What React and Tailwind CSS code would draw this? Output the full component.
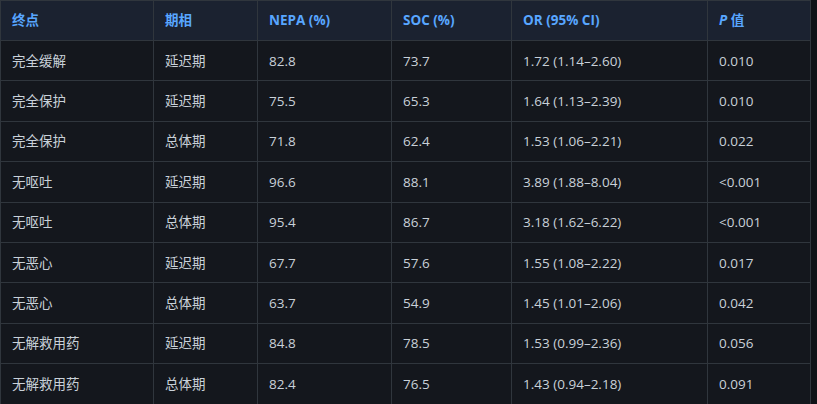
import React from "react";

const rows = [
  ["完全缓解", "延迟期", "82.8", "73.7", "1.72 (1.14–2.60)", "0.010"],
  ["完全保护", "延迟期", "75.5", "65.3", "1.64 (1.13–2.39)", "0.010"],
  ["完全保护", "总体期", "71.8", "62.4", "1.53 (1.06–2.21)", "0.022"],
  ["无呕吐", "延迟期", "96.6", "88.1", "3.89 (1.88–8.04)", "<0.001"],
  ["无呕吐", "总体期", "95.4", "86.7", "3.18 (1.62–6.22)", "<0.001"],
  ["无恶心", "延迟期", "67.7", "57.6", "1.55 (1.08–2.22)", "0.017"],
  ["无恶心", "总体期", "63.7", "54.9", "1.45 (1.01–2.06)", "0.042"],
  ["无解救用药", "延迟期", "84.8", "78.5", "1.53 (0.99–2.36)", "0.056"],
  ["无解救用药", "总体期", "82.4", "76.5", "1.43 (0.94–2.18)", "0.091"],
];

const widths = ["w-[153px]", "w-[104px]", "w-[134px]", "w-[120px]", "w-[196px]", "w-[103px]"];

export default function App() {
  return (
    <div
      className="w-[817px] h-[404px] bg-[#0f1217] overflow-hidden"
      style={{ fontFamily: '"Open Sans", "Noto Sans CJK SC", sans-serif' }}
    >
      <table className="border-collapse table-fixed w-[810px] bg-[#14171d]">
        <colgroup>
          {widths.map((w, i) => (
            <col key={i} className={w} />
          ))}
        </colgroup>
        <thead>
          <tr className="bg-[#1b2230] h-[40px] text-[13.5px]">
            {["终点", "期相", "NEPA (%)", "SOC (%)", "OR (95% CI)"].map((h) => (
              <th
                key={h}
                className="border border-[#30363d] pl-[11px] pr-3 text-left font-bold text-[#58a6ff]"
              >
                {h}
              </th>
            ))}
            <th className="border border-[#30363d] pl-[11px] pr-3 text-left font-bold text-[#58a6ff]">
              <i>P</i> 值
            </th>
          </tr>
        </thead>
        <tbody className="text-[13.5px]">
          {rows.map((r, i) => (
            <tr key={i} className="h-[40.4px]">
              {r.map((c, j) => (
                <td key={j} className="border border-[#30363d] pl-[11px] pr-3 text-[#c9d1d9]">
                  {c}
                </td>
              ))}
            </tr>
          ))}
        </tbody>
      </table>
    </div>
  );
}
